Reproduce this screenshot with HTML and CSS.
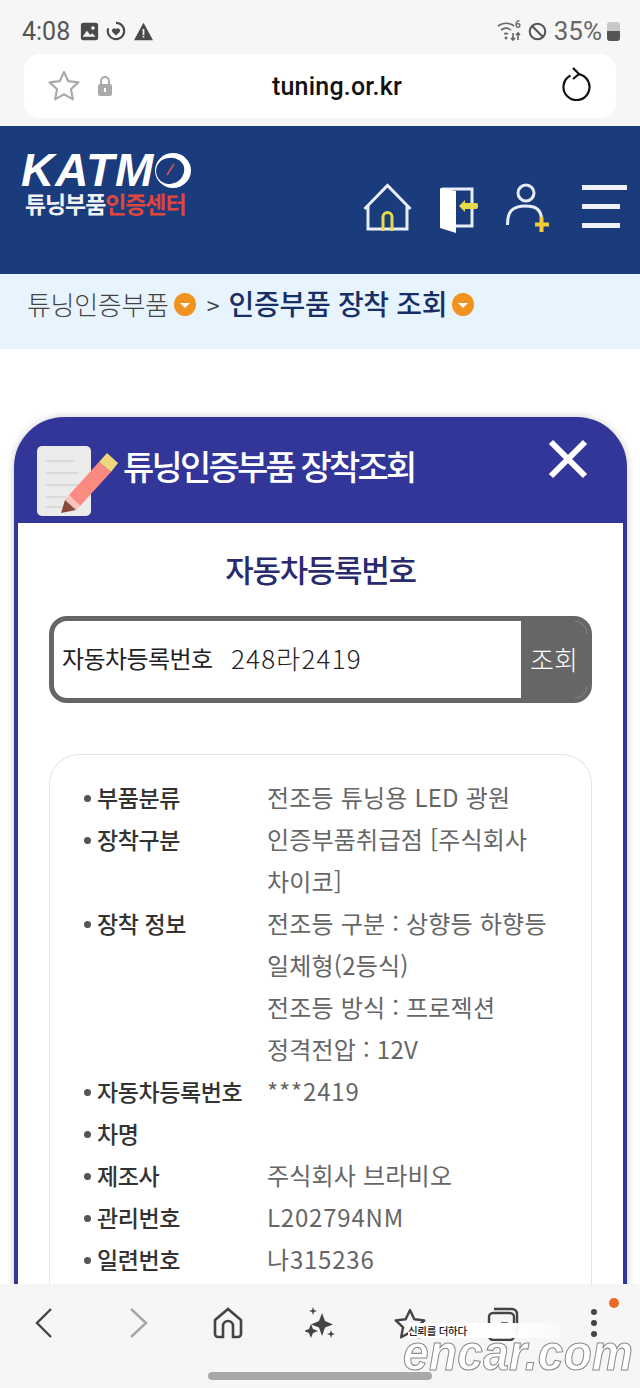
FILE: index.html
```html
<!DOCTYPE html>
<html lang="ko">
<head>
<meta charset="utf-8">
<title>tuning.or.kr</title>
<link rel="stylesheet" href="styles.css">
</head>
<body>
<div class="chrome-top">
  <div class="status">
    <div class="status-left">
      <span class="time">4:08</span>
      <svg class="si" width="19" height="19" viewBox="0 0 22 22"><rect x="1" y="1" width="20" height="20" rx="3" fill="#4a4a4a"/><circle cx="15" cy="7" r="2" fill="#f5f5f5"/><path d="M3 17l5-7 4 5 2-2 4 4z" fill="#f5f5f5"/></svg>
      <svg class="si" width="20" height="20" viewBox="0 0 22 22"><path d="M11 2a9 9 0 1 1-8.500 6M11 20" fill="none" stroke="#4a4a4a" stroke-width="2.400"/><path d="M11 16l-4-4a2.400 2.400 0 0 1 4-3 2.400 2.400 0 0 1 4 3z" fill="#4a4a4a"/></svg>
      <svg class="si" width="21" height="19" viewBox="0 0 24 22"><path d="M12 1L23 21H1z" fill="#4a4a4a"/><rect x="11" y="8" width="2" height="7" fill="#f5f5f5"/><rect x="11" y="16" width="2" height="2" fill="#f5f5f5"/></svg>
    </div>
    <div class="status-right">
      <svg width="26" height="22" viewBox="0 0 26 22" fill="none" stroke="#666" stroke-width="1.600"><path d="M1 6a13 13 0 0 1 16 0M4 10a8.500 8.500 0 0 1 10 0M7 14a4 4 0 0 1 4 0"/><circle cx="9" cy="18" r="1.400" fill="#666" stroke="none"/><path d="M16 13v7M14 18l2 2 2-2M21 20v-7M19 15l2-2 2 2"/><text x="18" y="8" class="wifi6">6</text></svg>
      <svg width="19" height="19" viewBox="0 0 22 22" fill="none" stroke="#555" stroke-width="2.400"><circle cx="11" cy="11" r="9"/><path d="M5 5l12 12"/></svg>
      <span class="pct">35%</span>
      <span class="battery"><span class="battery-fill"></span></span>
    </div>
  </div>
  <div class="urlbar">
    <div class="url-left">
      <svg width="34" height="34" viewBox="0 0 34 34"><path d="M17 3l4.300 9.200 10 1.200-7.400 6.900 2 10L17 25.400 8.100 30.300l2-10L2.700 13.400l10-1.200z" fill="none" stroke="#aaa" stroke-width="2.200" stroke-linejoin="round"/></svg>
      <svg width="18" height="24" viewBox="0 0 18 24"><path d="M5 11V7a4 4 0 0 1 8 0v4" fill="none" stroke="#aaa" stroke-width="2"/><rect x="2" y="10" width="14" height="12" rx="2" fill="#aaa"/><rect x="8" y="14" width="2" height="4" fill="#fff"/></svg>
    </div>
    <span class="url">tuning.or.kr</span>
    <svg class="reload" width="30" height="34" viewBox="0 0 30 34" fill="none" stroke="#111" stroke-width="2.200"><path d="M8.500 8.500a13 13 0 1 0 8-1.300"/><path d="M11 1l6 6-6 5"/></svg>
  </div>
</div>

<main class="page">
  <header class="site-header">
    <div class="logo">
      <div class="logo-top">
        <span class="logo-katm">KATM</span>
        <svg class="gauge" width="37" height="35" viewBox="0 0 37 35"><path fill-rule="evenodd" d="M19 0a18 17.500 0 1 1 0 35 18 17.500 0 0 1 0-35zM16 5a13 13 0 1 0 4 25 14 14 0 0 0 10-16c-1-5-8-10-14-9z" fill="#fff"/><path d="M13 22l7-11" stroke="#d8554a" stroke-width="1.600"/></svg>
      </div>
      <div class="logo-sub">튜닝부품<span class="logo-red">인증센터</span></div>
    </div>
    <nav class="site-icons">
      <svg width="49" height="50" viewBox="0 0 49 50" fill="none"><path d="M1.500 26L24.500 2.500l23 23.500M5 23v23h39V23" stroke="#e8eef7" stroke-width="3"/><path d="M20 48V34a4.500 4.500 0 0 1 9 0v14" stroke="#e6d94a" stroke-width="3"/></svg>
      <svg width="38" height="50" viewBox="0 0 38 50"><path d="M2 6h30v37H16" fill="none" stroke="#e8eef7" stroke-width="3"/><path d="M0 5l16 3v42L0 45z" fill="#fff"/><rect x="22" y="20" width="16" height="6" rx="2" fill="#e6d94a"/><path d="M25 17l-6 6 6 6z" fill="#e6d94a"/></svg>
      <svg width="43" height="50" viewBox="0 0 43 50" fill="none"><circle cx="20" cy="10" r="8" stroke="#e8eef7" stroke-width="3"/><path d="M1.500 42c0-14 5-19 18-19 11 0 15 4 16 12" stroke="#e8eef7" stroke-width="3"/><path d="M35.500 34v15M29 41.500h14" stroke="#f2cc38" stroke-width="4"/></svg>
      <div class="burger"><span class="b1"></span><span class="b2"></span><span class="b3"></span></div>
    </nav>
  </header>

  <div class="crumbs">
    <span class="crumb">튜닝인증부품</span><span class="dot"></span>
    <span class="sep">&gt;</span>
    <span class="crumb-now">인증부품 장착 조회</span><span class="dot"></span>
  </div>

  <section class="modal">
    <div class="modal-head">
      <svg class="note" width="86" height="72" viewBox="0 0 86 72"><rect x="1" y="1" width="54" height="70" rx="5" fill="#ebebeb"/><g stroke="#d5d5d5" stroke-width="1.500"><path d="M10 16h28M10 28h32M10 40h32M10 52h20M10 62h26"/></g><path d="M33 50l30-33 12 10-31 34z" fill="#fb8a80"/><path d="M63 17l8-9 11 10-7 9z" fill="#f0d67c"/><path d="M33 50l11 11-4 4-11-10z" fill="#f9c2bb"/><path d="M25 68l4-13 11 10z" fill="#8a4a3a"/></svg>
      <h1 class="modal-title">튜닝인증부품 장착조회</h1>
      <svg class="close" width="40" height="40" viewBox="0 0 40 40"><path d="M3 3l34 34M37 3L3 37" stroke="#fff" stroke-width="6"/></svg>
    </div>
    <div class="modal-body">
      <h2 class="section-title">자동차등록번호</h2>
      <div class="search">
        <div class="search-field"><span class="search-label">자동차등록번호</span><span class="search-value">248라2419</span></div>
        <div class="search-btn">조회</div>
      </div>
      <div class="info">
        <div class="row"><div class="key">부품분류</div><div class="val">전조등 튜닝용 LED 광원</div></div>
        <div class="row"><div class="key">장착구분</div><div class="val">인증부품취급점 [주식회사<br>차이코]</div></div>
        <div class="row"><div class="key">장착 정보</div><div class="val">전조등 구분 : 상향등 하향등<br>일체형(2등식)<br>전조등 방식 : 프로젝션<br>정격전압 : 12V</div></div>
        <div class="row"><div class="key">자동차등록번호</div><div class="val val-num">***2419</div></div>
        <div class="row"><div class="key">차명</div><div class="val"></div></div>
        <div class="row"><div class="key">제조사</div><div class="val">주식회사 브라비오</div></div>
        <div class="row"><div class="key">관리번호</div><div class="val val-num">L202794NM</div></div>
        <div class="row"><div class="key">일련번호</div><div class="val val-num">나315236</div></div>
      </div>
    </div>
  </section>
</main>

<footer class="chrome-bottom">
  <div class="toolbar">
    <svg width="24" height="32" viewBox="0 0 24 32" fill="none" stroke="#444" stroke-width="2.400"><path d="M19 2L5 16l14 14"/></svg>
    <svg width="24" height="32" viewBox="0 0 24 32" fill="none" stroke="#a5a5a5" stroke-width="2.400"><path d="M5 2l15 14L5 30"/></svg>
    <svg width="32" height="32" viewBox="0 0 32 32" fill="none" stroke="#444" stroke-width="2.600"><path d="M3 13L16 2l13 11v14a3 3 0 0 1-3 3h-5V19a5 5 0 0 0-10 0v11H6a3 3 0 0 1-3-3z"/></svg>
    <svg width="30" height="32" viewBox="0 0 30 32" fill="#444"><path d="M17 6l3 8 8 3.500-8 3-3 8.500-3-8.500-8-3 8-3.500z"/><path d="M8 0l1 3 3 1-3 1-1 3-1-3-3-1 3-1zM26 23l1 3 3 1-3 1-1 3-1-3-3-1 3-1zM6 17l2 5 5 2-5 2-2 5-2-5-5-2 5-2z"/></svg>
    <svg width="34" height="34" viewBox="0 0 34 34"><path d="M17 3l4.300 9.200 10 1.200-7.400 6.900 2 10L17 25.400 8.100 30.300l2-10L2.700 13.400l10-1.200z" fill="none" stroke="#444" stroke-width="2.400" stroke-linejoin="round"/></svg>
    <svg width="32" height="34" viewBox="0 0 32 34" fill="none" stroke="#444" stroke-width="2.400"><rect x="2" y="6" width="25" height="27" rx="4"/><path d="M7 2h18a5 5 0 0 1 5 5v20"/><path d="M9 16v11M14 16h7M14 16v5h7v6h-7" stroke-width="1.600"/></svg>
    <div class="more"><span></span><span></span><span></span></div>
  </div>
  <div class="handle"></div>
  <span class="notice-dot"></span>
  <div class="wm-tag">신뢰를 더하다</div>
  <div class="wm-text">encar.com</div>
</footer>
</body>
</html>
```
FILE: styles.css
```css
* { box-sizing: border-box; }
html, body { margin: 0; padding: 0; }
body {
  width: 640px;
  height: 1388px;
  overflow: hidden;
  display: flex;
  flex-direction: column;
  background: #fff;
  font-family: "Noto Sans CJK KR", "Noto Sans", sans-serif;
}

/* browser top */
.chrome-top { background: #f6f6f6; height: 126px; flex: none; padding: 0 24px 0; }
.status { height: 54px; display: flex; justify-content: space-between; align-items: center; padding-top: 8px; margin: 0 -4px 0 -2px; }
.status-left, .status-right { display: flex; align-items: center; gap: 7px; }
.status-right { gap: 5px; }
.time { font: 400 25px Roboto, sans-serif; color: #555; margin-right: 3px; }
.pct { font: 400 26px Roboto, sans-serif; color: #666; margin-left: 2px; }
.wifi6 { font: 700 10px Roboto, sans-serif; fill: #666; stroke: none; }
.battery { width: 13px; height: 19px; background: #c9c9c9; border-radius: 3px; display: flex; align-items: flex-end; overflow: hidden; }
.battery-fill { width: 100%; height: 10px; background: #555; }
.urlbar { height: 64px; background: #fff; border-radius: 16px; display: flex; align-items: center; padding: 0 24px 0 23px; position: relative; justify-content: space-between; }
.url-left { display: flex; align-items: center; gap: 15px; }
.url { font: 500 25px/1 Roboto, sans-serif; color: #111; margin-left: -2px; letter-spacing: 0.2px; }
.reload { margin-top: -4px; }

/* page */
.page { flex: 1; min-height: 0; overflow: hidden; }
.site-header { height: 148px; background: #1a3b7c; display: flex; justify-content: space-between; padding: 26px 13px 0 21px; }
.logo { width: 176px; }
.logo-top { display: flex; align-items: center; height: 36px; }
.logo-katm { font: italic 700 46px/36px "Liberation Sans", sans-serif; color: #fff; letter-spacing: 1px; }
.gauge { margin-left: 0; flex: none; }
.logo-sub { font-weight: 700; font-size: 23px; line-height: 24px; color: #f2f2f2; letter-spacing: -1.100px; margin: 3px 0 0 4px; white-space: nowrap; }
.logo-red { color: #e0463c; }
.site-icons { display: flex; align-items: flex-start; gap: 28px; padding-top: 31px; }
.burger { width: 45px; display: flex; flex-direction: column; gap: 14px; margin-left: 5px; padding-top: 2px; }
.burger span { display: block; height: 5px; background: #eef2f8; }
.b1 { width: 45px; }
.b2, .b3 { width: 38px; }

.crumbs { height: 75px; background: #e8f4fd; display: flex; align-items: center; padding: 0 0 17px 27px; white-space: nowrap; }
.crumb { font-size: 26px; font-weight: 300; color: #444; letter-spacing: -0.300px; }
.crumb-now { font-size: 28px; font-weight: 500; color: #172f66; letter-spacing: -0.300px; }
.sep { font-size: 23px; color: #444; margin: 4px 9px 0 11px; }
.dot { width: 22px; height: 23px; border-radius: 50%; background: #f2931f; margin: 2px 0 0 5px; position: relative; flex: none; }
.dot::after { content: ""; position: absolute; left: 6px; top: 10px; border: 5px solid transparent; border-top: 5px solid #fff; border-bottom: 0; }

/* modal */
.modal { margin: 68px 13px 0 14px; height: 900px; background: #333699; border-radius: 50px 50px 0 0; padding: 0 4px; box-shadow: 0 0 8px rgba(0,0,0,0.2); }
.modal-head { height: 106px; display: flex; align-items: flex-start; position: relative; }
.note { position: absolute; left: 18px; top: 28px; }
.modal-title { margin: 25px 0 0 105px; font-size: 34px; line-height: 48px; font-weight: 500; color: #fff; letter-spacing: -2.800px; white-space: nowrap; }
.close { position: absolute; right: 35px; top: 22px; }
.modal-body { background: #fff; padding: 22px 31px 0; height: 794px; }
.section-title { margin: 0; text-align: center; font-size: 31px; line-height: 48px; font-weight: 500; color: #2a2a6e; letter-spacing: -1.300px; }
.search { margin-top: 23px; height: 87px; border: 5px solid #666; border-radius: 18px; display: flex; overflow: hidden; }
.search-field { flex: 1; padding: 0 0 4px 8px; display: flex; align-items: center; font-size: 24px; color: #333; white-space: nowrap; }
.search-label { width: 169px; font-weight: 400; letter-spacing: -0.600px; color: #222; }
.search-value { font-size: 26px; letter-spacing: 1.200px; font-weight: 300; color: #222; }
.search-btn { width: 66px; background: #666; color: #fff; font-size: 26px; font-weight: 300; display: flex; align-items: center; justify-content: center; padding-bottom: 2px; }
.info { margin-top: 51px; border: 1px solid #e4e4e4; border-bottom: 0; border-radius: 30px 30px 0 0; padding: 21px 20px 0 34px; height: 640px; }
.row { display: flex; font-size: 23px; line-height: 42px; }
.key { width: 183px; flex: none; padding-left: 13px; position: relative; font-weight: 500; color: #333; letter-spacing: -0.400px; white-space: nowrap; }
.key::before { content: ""; position: absolute; left: 0; top: 19px; width: 7px; height: 7px; border-radius: 50%; background: #555; }
.val { color: #666; font-size: 24px; font-weight: 400; letter-spacing: 0.200px; white-space: nowrap; }
.val-num { letter-spacing: 0.800px; }

/* browser bottom */
.chrome-bottom { height: 104px; flex: none; background: #f6f6f6; position: relative; overflow: hidden; }
.toolbar { display: grid; grid-template-columns: 94px 86px 93px 88px 94px 104px 6px; align-items: start; padding: 23px 0 0 32px; height: 80px; }
.more { display: flex; flex-direction: column; gap: 5px; padding-top: 2px; }
.more span { width: 6px; height: 6px; border-radius: 50%; background: #444; }
.handle { width: 224px; height: 8px; border-radius: 4px; background: #a8a8a8; margin: 8px 0 0 208px; }
.notice-dot { position: absolute; left: 609px; top: 14px; width: 10px; height: 10px; border-radius: 50%; background: #ec6a26; }
.wm-tag { position: absolute; left: 408px; top: 39px; width: 153px; height: 15px; background: linear-gradient(90deg, #fff 68%, rgba(255,255,255,0.4)); font-size: 10.500px; line-height: 15px; color: #222; white-space: nowrap; font-weight: 500; letter-spacing: -0.300px; }
.wm-text { position: absolute; left: 403px; top: 56px; font: italic 700 46px/24px "Liberation Sans", sans-serif; color: #fff; -webkit-text-stroke: 1px #8c8c8c; letter-spacing: 0.300px; white-space: nowrap; transform: scaleY(1.1); }
```
